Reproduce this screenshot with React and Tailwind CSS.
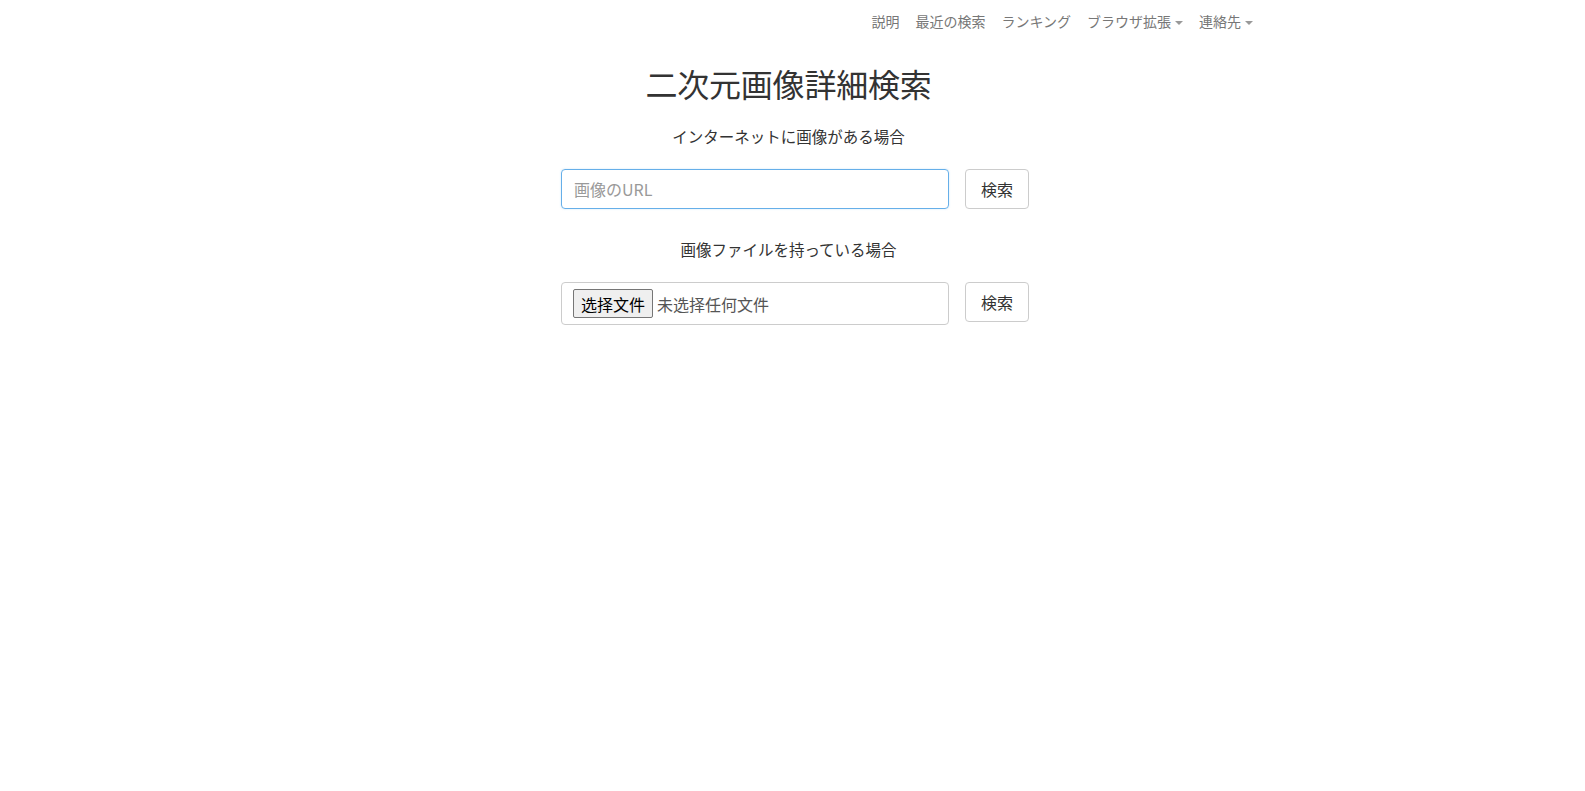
import React from "react";

const font = { fontFamily: '"Noto Sans CJK JP", "Noto Sans", sans-serif' };
const scFont = { fontFamily: '"Noto Sans CJK SC", "Noto Sans", sans-serif' };

function Caret() {
  return <span className="ml-1 inline-block border-x-[4px] border-t-[4px] border-x-transparent border-t-[#999] align-middle" />;
}

export default function App() {
  const navItems = [
    { label: "説明" },
    { label: "最近の検索" },
    { label: "ランキング" },
    { label: "ブラウザ拡張", caret: true },
    { label: "連絡先", caret: true },
  ];

  return (
    <div className="min-h-screen w-full bg-white text-[#333]" style={font}>
      {/* nav */}
      <nav className="flex h-[42px] items-center justify-end pr-[324px]">
        <ul className="flex items-center">
          {navItems.map((item) => (
            <li key={item.label} className="px-2 text-[14px] leading-5 text-[#777]">
              {item.label}
              {item.caret && <Caret />}
            </li>
          ))}
        </ul>
      </nav>

      {/* main */}
      <main className="flex flex-col items-center">
        <h1 className="mt-[24px] mr-[8px] text-[32px] font-normal leading-[35px] tracking-[-0.2px] text-[#333]">
          二次元画像詳細検索
        </h1>

        <p className="mt-[23px] mr-[8px] text-[15.5px] leading-6 text-[#333]">インターネットに画像がある場合</p>

        <div className="mt-[21px] ml-[5px] flex w-[468px] gap-4">
          <div className="flex h-10 flex-1 items-center rounded-[4px] border border-[#66afe9] px-3 shadow-[0_0_2px_rgba(102,175,233,0.35)]">
            <span className="text-[16px] text-[#999]">画像のURL</span>
          </div>
          <button className="h-10 w-16 rounded-[4px] border border-[#ccc] bg-white text-[16px] text-[#333]">
            検索
          </button>
        </div>

        <p className="mt-[28px] mr-[8px] text-[15.5px] leading-6 text-[#333]">画像ファイルを持っている場合</p>

        <div className="mt-[21px] ml-[5px] flex w-[468px] items-start gap-4">
          <div className="flex h-[43px] flex-1 items-center rounded-[4px] border border-[#ccc] pl-[11px]" style={scFont}>
            <span className="flex h-[29px] items-center rounded-[2px] border border-[#767676] bg-[#efefef] px-[7px] text-[16px] text-black">
              选择文件
            </span>
            <span className="ml-[4px] text-[16px] text-[#555]">未选择任何文件</span>
          </div>
          <button className="h-10 w-16 rounded-[4px] border border-[#ccc] bg-white text-[16px] text-[#333]">
            検索
          </button>
        </div>
      </main>
    </div>
  );
}
